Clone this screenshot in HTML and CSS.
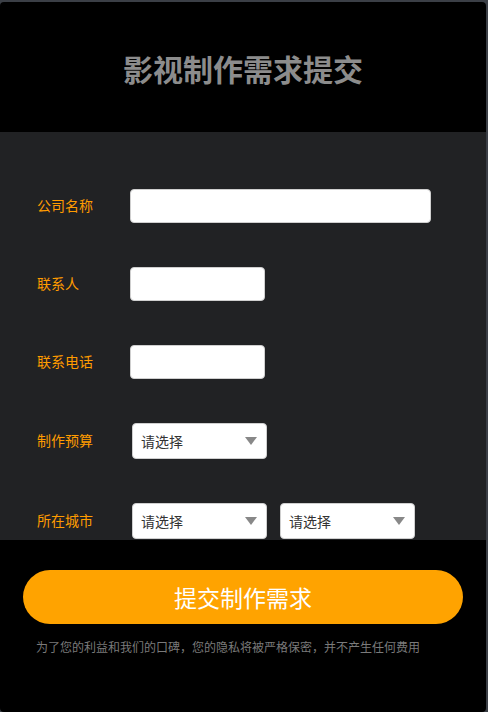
FILE: index.html
```html
<!DOCTYPE html>
<html lang="zh-CN">
<head>
<meta charset="utf-8">
<title>影视制作需求提交</title>
<link rel="stylesheet" href="styles.css">
</head>
<body>
<div class="app">
  <header class="header">
    <h1 class="title">影视制作需求提交</h1>
  </header>
  <section class="form">
    <div class="row">
      <label class="label">公司名称</label>
      <input class="input input-wide" type="text">
    </div>
    <div class="row">
      <label class="label">联系人</label>
      <input class="input input-short" type="text">
    </div>
    <div class="row">
      <label class="label">联系电话</label>
      <input class="input input-short" type="text">
    </div>
    <div class="row row-select">
      <label class="label">制作预算</label>
      <div class="select"><span>请选择</span><i class="arrow"></i></div>
    </div>
    <div class="row row-select">
      <label class="label">所在城市</label>
      <div class="selects">
        <div class="select"><span>请选择</span><i class="arrow"></i></div>
        <div class="select"><span>请选择</span><i class="arrow"></i></div>
      </div>
    </div>
  </section>
  <footer class="footer">
    <button class="submit" type="button">提交制作需求</button>
    <p class="note">为了您的利益和我们的口碑，您的隐私将被严格保密，并不产生任何费用</p>
  </footer>
</div>
</body>
</html>
```

FILE: styles.css
```css
* { box-sizing: border-box; }
html, body { margin: 0; padding: 0; }
body {
  background: #3b3f46;
  font-family: "Noto Sans CJK SC", "Noto Sans", sans-serif;
  width: 488px;
  height: 712px;
  overflow: hidden;
}
.app {
  width: 486px;
  height: 710px;
  margin-top: 2px;
  background: #000;
  border-radius: 4px;
  overflow: hidden;
  display: flex;
  flex-direction: column;
}
.header {
  height: 130px;
  display: flex;
  align-items: center;
  justify-content: center;
  padding-top: 2px;
}
.title {
  margin: 0;
  font-size: 30px;
  font-weight: 700;
  color: #8c8c8c;
  line-height: 1;
}
.form {
  height: 408px;
  background: #212224;
  padding: 57px 0 0 37px;
  display: flex;
  flex-direction: column;
  gap: 44px;
}
.row {
  display: flex;
  align-items: center;
  height: 34px;
}
.row-select { height: 36px; }
.label {
  width: 93px;
  flex: none;
  font-size: 14px;
  color: #ff9c00;
  line-height: 1;
  margin-top: -3px;
}
.input {
  height: 34px;
  border: 1px solid #cfcfcf;
  border-radius: 4px;
  background: #fff;
  outline: none;
  padding: 0 8px;
}
.input-wide { width: 301px; }
.input-short { width: 135px; }
.selects {
  display: flex;
  gap: 13px;
}
.select {
  width: 135px;
  height: 36px;
  margin-left: 2px;
  background: #fff;
  border: 1px solid #cfcfcf;
  border-radius: 4px;
  display: flex;
  align-items: center;
  justify-content: space-between;
  padding: 0 9px 0 8px;
  font-size: 14px;
  color: #333;
}
.selects .select + .select { margin-left: 0; }
.arrow {
  width: 0;
  height: 0;
  border-left: 6px solid transparent;
  border-right: 6px solid transparent;
  border-top: 8px solid #888;
}
.footer {
  flex: 1;
  padding: 30px 23px 0;
}
.submit {
  display: block;
  width: 440px;
  height: 54px;
  border: none;
  border-radius: 27px;
  background: #ffa300;
  color: #fff;
  font-family: "Noto Sans CJK SC", "Noto Sans", sans-serif;
  font-size: 23px;
  line-height: 1;
  padding: 0;
}
.note {
  margin: 15px 0 0 13px;
  font-size: 12px;
  color: #7a7a7a;
  line-height: 16px;
}
```
